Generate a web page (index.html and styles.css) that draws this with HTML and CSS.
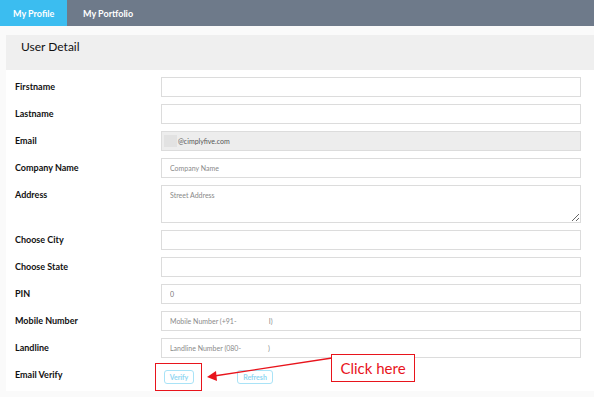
FILE: index.html
```html
<!DOCTYPE html>
<html lang="en">
<head>
<meta charset="UTF-8" />
<meta name="viewport" content="width=device-width, initial-scale=1" />
<title>My Profile - User Detail</title>
<link rel="stylesheet" href="styles.css">
</head>
<body>

  <!-- Top tabs -->
  <div class="tabbar">
    <a class="tab active">My Profile</a>
    <a class="tab">My Portfolio</a>
  </div>

  <div class="page">
    <div class="panel">
      <div class="panel-head">User Detail</div>
      <div class="panel-body">
        <div class="row">
          <label>Firstname</label>
          <input type="text" />
        </div>
        <div class="row">
          <label>Lastname</label>
          <input type="text" />
        </div>
        <div class="row">
          <label>Email</label>
          <div class="field readonly"><span class="hidden-part"></span>@cimplyfive.com</div>
        </div>
        <div class="row">
          <label>Company Name</label>
          <input type="text" placeholder="Company Name" />
        </div>
        <div class="row">
          <label>Address</label>
          <textarea placeholder="Street Address"></textarea>
        </div>
        <div class="row">
          <label>Choose City</label>
          <input type="text" />
        </div>
        <div class="row">
          <label>Choose State</label>
          <input type="text" />
        </div>
        <div class="row">
          <label>PIN</label>
          <input type="text" value="0" />
        </div>
        <div class="row">
          <label>Mobile Number</label>
          <input type="text" placeholder="Mobile Number (+91-                  I)" />
        </div>
        <div class="row">
          <label>Landline</label>
          <input type="text" placeholder="Landline Number (080-               )" />
        </div>
        <div class="row last">
          <label>Email Verify</label>
          <div class="btns">
            <button class="btn-outline verify">Verify</button>
            <button class="btn-outline refresh">Refresh</button>
          </div>
        </div>
      </div>
    </div>
  </div>

  <!-- Annotation -->
  <div class="mark-box"></div>
  <div class="callout">Click here</div>
  <svg class="arrow" width="594" height="397" viewBox="0 0 594 397">
    <line x1="332" y1="358" x2="214" y2="376" stroke="#e8141c" stroke-width="1.3" />
    <polygon points="207,377 216,371 217,381" fill="#e8141c" />
  </svg>

</body>
</html>
```

FILE: styles.css
```css
/* Base */
body {
  margin: 0;
  background: #fafafa;
  font-family: Lato, "Open Sans", sans-serif;
  color: #111;
}

/* Tab bar */
.tabbar {
  display: flex;
  height: 26px;
  background: #6e7a8a;
}
.tab {
  display: flex;
  align-items: center;
  padding: 0 15px 0 16px;
  color: #fff;
  font-size: 9px;
  font-weight: bold;
  white-space: nowrap;
}
.tab.active {
  background: #3bbdf0;
  width: 67px;
  box-sizing: border-box;
  padding: 0 0 0 13px;
}

/* Panel */
.page {
  padding-top: 9px;
}
.panel {
  margin-left: 6px;
  background: #fff;
}
.panel-head {
  height: 35px;
  box-sizing: border-box;
  padding: 5px 15px;
  background: #efefef;
  font-size: 12px;
  line-height: 14px;
}
.panel-body {
  padding: 7px 13px 6px 9px;
}

/* Form rows */
.row {
  display: flex;
  align-items: flex-start;
  margin-bottom: 7px;
}
.row.last {
  margin-bottom: 0;
}
.row label {
  width: 146px;
  flex: none;
  font-size: 9px;
  font-weight: bold;
  line-height: 20px;
}
input[type="text"], textarea, .field {
  flex: 1;
  height: 20px;
  box-sizing: border-box;
  margin: 0;
  padding: 0 8px;
  border: 1px solid #dcdcdc;
  border-radius: 0;
  background: #fff;
  font-family: Lato, "Open Sans", sans-serif;
  font-size: 7px;
  color: #777;
  outline: none;
}
input::placeholder, textarea::placeholder {
  color: #8a8a8a;
  white-space: pre;
}
textarea {
  height: 38px;
  padding-top: 5px;
  display: block;
}
.field {
  display: flex;
  align-items: center;
  padding-left: 2px;
}
.readonly {
  background: #ededed;
  color: #555;
}
.hidden-part {
  width: 13px;
  height: 12px;
  margin-right: 1px;
  background: #e2e2e2;
}

/* Verify buttons */
.btns {
  display: flex;
  gap: 43px;
  padding: 5px 0 0 3px;
}
.btn-outline {
  height: 14px;
  padding: 0;
  border: 1px solid #a9e3f7;
  border-radius: 3px;
  background: #fff;
  color: #8fd6f2;
  font-family: Lato, "Open Sans", sans-serif;
  font-size: 7px;
  font-weight: bold;
}
.verify { width: 30px; }
.refresh { width: 36px; }

/* Annotation overlay */
.mark-box {
  position: absolute;
  left: 155px;
  top: 363px;
  width: 45px;
  height: 26px;
  border: 1.5px solid #e8141c;
}
.callout {
  position: absolute;
  left: 331px;
  top: 354px;
  width: 82px;
  height: 26px;
  border: 1.5px solid #e8141c;
  background: #fff;
  color: #e8141c;
  font-size: 15px;
  line-height: 26px;
  text-align: center;
}
.arrow {
  position: absolute;
  left: 0;
  top: 0;
  pointer-events: none;
}
```
